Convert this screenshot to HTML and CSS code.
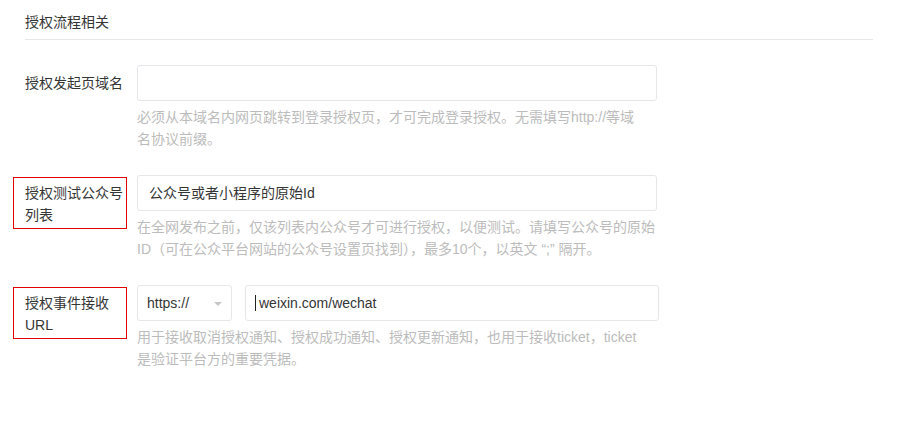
FILE: index.html
```html
<!DOCTYPE html>
<html lang="zh-CN">
<head>
<meta charset="utf-8">
<title>授权流程相关</title>
<link rel="stylesheet" href="styles.css">
</head>
<body>
<div class="section">
  <h3 class="section-title">授权流程相关</h3>
  <div class="form">
    <div class="row">
      <label class="label">授权发起页域名</label>
      <div class="field">
        <div class="input"></div>
        <p class="help">必须从本域名内网页跳转到登录授权页，才可完成登录授权。无需填写http://等域<br>名协议前缀。</p>
      </div>
    </div>
    <div class="row">
      <label class="label marked">授权测试公众号列表</label>
      <div class="field">
        <div class="input"><span class="value">公众号或者小程序的原始Id</span></div>
        <p class="help">在全网发布之前，仅该列表内公众号才可进行授权，以便测试。请填写公众号的原始<br>ID（可在公众平台网站的公众号设置页找到），最多10个，以英文 “;” 隔开。</p>
      </div>
    </div>
    <div class="row">
      <label class="label marked">授权事件接收URL</label>
      <div class="field wide">
        <div class="combo">
          <div class="select"><span>https://</span><i class="arrow"></i></div>
          <div class="input url"><span class="caret"></span><span class="value">weixin.com/wechat</span></div>
        </div>
        <p class="help">用于接收取消授权通知、授权成功通知、授权更新通知，也用于接收ticket，ticket<br>是验证平台方的重要凭据。</p>
      </div>
    </div>
  </div>
</div>
</body>
</html>
```
FILE: styles.css
```css
* { box-sizing: border-box; }
html, body { margin: 0; padding: 0; background: #fff; }
body {
  font-family: "Liberation Sans", "Noto Sans CJK SC", sans-serif;
  font-size: 14px;
  color: #353535;
  width: 897px;
  height: 425px;
  overflow: hidden;
}
.section { padding: 0 24px 0 25px; }
.section-title {
  margin: 0;
  padding: 11px 0 6px;
  font-size: 14px;
  font-weight: normal;
  line-height: 22px;
  border-bottom: 1px solid #e7e7eb;
}
.form { padding-top: 25px; display: flex; flex-direction: column; gap: 25px; }
.row { display: flex; align-items: flex-start; }
.label {
  box-sizing: content-box;
  width: 100px;
  margin-right: 12px;
  padding-top: 7px;
  line-height: 22px;
  color: #353535;
}
.label.marked {
  border: 1px solid #e00000;
  margin: 2px 10px 0 -12px;
  padding: 4px 1px 2px 11px;
}
.field { width: 520px; }
.field.wide { width: 522px; }
.input {
  height: 36px;
  border: 1px solid #e7e7eb;
  border-radius: 3px;
  padding: 0 11px;
  display: flex;
  align-items: center;
  line-height: 22px;
}
.value { color: #353535; }
.help {
  margin: 5px 0 0;
  line-height: 22px;
  color: #bcbcbc;
  white-space: nowrap;
}
.combo { display: flex; gap: 13px; }
.select {
  width: 95px;
  height: 36px;
  flex: none;
  border: 1px solid #e7e7eb;
  border-radius: 3px;
  padding: 0 0 0 9px;
  display: flex;
  align-items: center;
  position: relative;
}
.arrow {
  position: absolute;
  right: 9px;
  top: 16px;
  width: 0;
  height: 0;
  border-left: 4px solid transparent;
  border-right: 4px solid transparent;
  border-top: 4px solid #c7c7c7;
}
.input.url { flex: 1; padding-left: 9px; }
.caret {
  display: inline-block;
  width: 1px;
  height: 16px;
  background: #222;
  margin-right: 3px;
}
```
